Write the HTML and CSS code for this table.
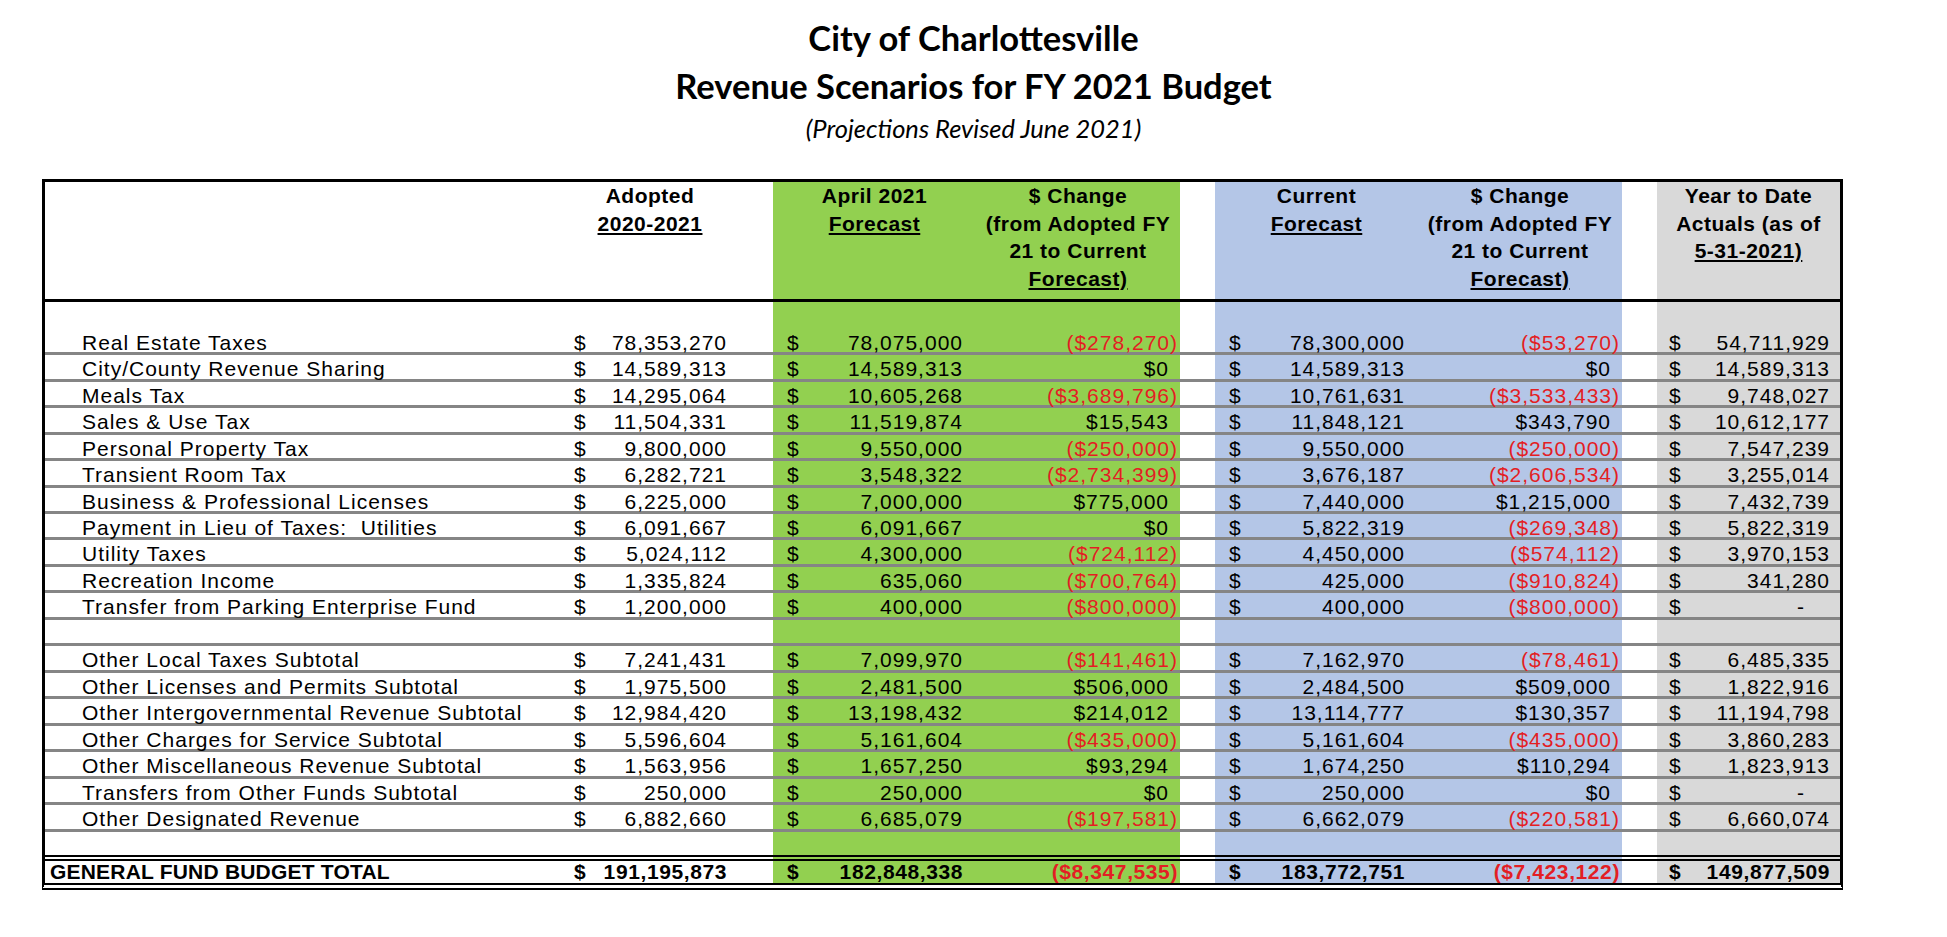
FILE: index.html
```html
<!DOCTYPE html>
<html lang="en">
<head>
<meta charset="utf-8">
<title>City of Charlottesville – Revenue Scenarios for FY 2021 Budget</title>
<link rel="stylesheet" href="styles.css">
</head>
<body>
<header class="titles">
  <div class="t1">City of Charlottesville</div>
  <div class="t2">Revenue Scenarios for FY 2021 Budget</div>
  <div class="t3">(Projections Revised June 2021)</div>
</header>

<table class="sheet">
  <colgroup>
    <col class="c-label">
    <col class="c-adopt">
    <col class="c-gap1">
    <col class="c-num g">
    <col class="c-chg g">
    <col class="c-gap b-gap">
    <col class="c-num b">
    <col class="c-chg b">
    <col class="c-gap">
    <col class="c-ytd y">
  </colgroup>
  <thead>
    <tr class="head">
      <th><div class="hcell"></div></th>
      <th><div class="hcell">Adopted<br><u>2020-2021</u></div></th>
      <th></th>
      <th><div class="hcell">April 2021<br><u>Forecast</u></div></th>
      <th><div class="hcell">$ Change<br>(from Adopted FY<br>21 to Current<br><u>Forecast)</u></div></th>
      <th></th>
      <th><div class="hcell">Current<br><u>Forecast</u></div></th>
      <th><div class="hcell">$ Change<br>(from Adopted FY<br>21 to Current<br><u>Forecast)</u></div></th>
      <th></th>
      <th><div class="hcell">Year to Date<br>Actuals (as of<br><u>5-31-2021)</u></div></th>
    </tr>
  </thead>
  <tbody>
    <tr class="blank-top"><td><div class="sp-top"></div></td><td></td><td></td><td></td><td></td><td></td><td></td><td></td><td></td><td></td></tr>

    <tr class="row"><td class="lbl">Real Estate Taxes</td><td><div class="acct"><span>$</span><span>78,353,270</span></div></td><td></td><td><div class="acct"><span>$</span><span>78,075,000</span></div></td><td class="chg neg">($278,270)</td><td></td><td><div class="acct"><span>$</span><span>78,300,000</span></div></td><td class="chg neg">($53,270)</td><td></td><td><div class="acct ytd"><span>$</span><span>54,711,929</span></div></td></tr>
    <tr class="row"><td class="lbl">City/County Revenue Sharing</td><td><div class="acct"><span>$</span><span>14,589,313</span></div></td><td></td><td><div class="acct"><span>$</span><span>14,589,313</span></div></td><td class="chg">$0</td><td></td><td><div class="acct"><span>$</span><span>14,589,313</span></div></td><td class="chg">$0</td><td></td><td><div class="acct ytd"><span>$</span><span>14,589,313</span></div></td></tr>
    <tr class="row"><td class="lbl">Meals Tax</td><td><div class="acct"><span>$</span><span>14,295,064</span></div></td><td></td><td><div class="acct"><span>$</span><span>10,605,268</span></div></td><td class="chg neg">($3,689,796)</td><td></td><td><div class="acct"><span>$</span><span>10,761,631</span></div></td><td class="chg neg">($3,533,433)</td><td></td><td><div class="acct ytd"><span>$</span><span>9,748,027</span></div></td></tr>
    <tr class="row"><td class="lbl">Sales &amp; Use Tax</td><td><div class="acct"><span>$</span><span>11,504,331</span></div></td><td></td><td><div class="acct"><span>$</span><span>11,519,874</span></div></td><td class="chg">$15,543</td><td></td><td><div class="acct"><span>$</span><span>11,848,121</span></div></td><td class="chg">$343,790</td><td></td><td><div class="acct ytd"><span>$</span><span>10,612,177</span></div></td></tr>
    <tr class="row"><td class="lbl">Personal Property Tax</td><td><div class="acct"><span>$</span><span>9,800,000</span></div></td><td></td><td><div class="acct"><span>$</span><span>9,550,000</span></div></td><td class="chg neg">($250,000)</td><td></td><td><div class="acct"><span>$</span><span>9,550,000</span></div></td><td class="chg neg">($250,000)</td><td></td><td><div class="acct ytd"><span>$</span><span>7,547,239</span></div></td></tr>
    <tr class="row"><td class="lbl">Transient Room Tax</td><td><div class="acct"><span>$</span><span>6,282,721</span></div></td><td></td><td><div class="acct"><span>$</span><span>3,548,322</span></div></td><td class="chg neg">($2,734,399)</td><td></td><td><div class="acct"><span>$</span><span>3,676,187</span></div></td><td class="chg neg">($2,606,534)</td><td></td><td><div class="acct ytd"><span>$</span><span>3,255,014</span></div></td></tr>
    <tr class="row"><td class="lbl">Business &amp; Professional Licenses</td><td><div class="acct"><span>$</span><span>6,225,000</span></div></td><td></td><td><div class="acct"><span>$</span><span>7,000,000</span></div></td><td class="chg">$775,000</td><td></td><td><div class="acct"><span>$</span><span>7,440,000</span></div></td><td class="chg">$1,215,000</td><td></td><td><div class="acct ytd"><span>$</span><span>7,432,739</span></div></td></tr>
    <tr class="row"><td class="lbl">Payment in Lieu of Taxes:&nbsp; Utilities</td><td><div class="acct"><span>$</span><span>6,091,667</span></div></td><td></td><td><div class="acct"><span>$</span><span>6,091,667</span></div></td><td class="chg">$0</td><td></td><td><div class="acct"><span>$</span><span>5,822,319</span></div></td><td class="chg neg">($269,348)</td><td></td><td><div class="acct ytd"><span>$</span><span>5,822,319</span></div></td></tr>
    <tr class="row"><td class="lbl">Utility Taxes</td><td><div class="acct"><span>$</span><span>5,024,112</span></div></td><td></td><td><div class="acct"><span>$</span><span>4,300,000</span></div></td><td class="chg neg">($724,112)</td><td></td><td><div class="acct"><span>$</span><span>4,450,000</span></div></td><td class="chg neg">($574,112)</td><td></td><td><div class="acct ytd"><span>$</span><span>3,970,153</span></div></td></tr>
    <tr class="row"><td class="lbl">Recreation Income</td><td><div class="acct"><span>$</span><span>1,335,824</span></div></td><td></td><td><div class="acct"><span>$</span><span>635,060</span></div></td><td class="chg neg">($700,764)</td><td></td><td><div class="acct"><span>$</span><span>425,000</span></div></td><td class="chg neg">($910,824)</td><td></td><td><div class="acct ytd"><span>$</span><span>341,280</span></div></td></tr>
    <tr class="row"><td class="lbl">Transfer from Parking Enterprise Fund</td><td><div class="acct"><span>$</span><span>1,200,000</span></div></td><td></td><td><div class="acct"><span>$</span><span>400,000</span></div></td><td class="chg neg">($800,000)</td><td></td><td><div class="acct"><span>$</span><span>400,000</span></div></td><td class="chg neg">($800,000)</td><td></td><td><div class="acct ytd"><span>$</span><span class="dash">-</span></div></td></tr>

    <tr class="row blank"><td class="lbl">&nbsp;</td><td></td><td></td><td></td><td></td><td></td><td></td><td></td><td></td><td></td></tr>

    <tr class="row"><td class="lbl">Other Local Taxes Subtotal</td><td><div class="acct"><span>$</span><span>7,241,431</span></div></td><td></td><td><div class="acct"><span>$</span><span>7,099,970</span></div></td><td class="chg neg">($141,461)</td><td></td><td><div class="acct"><span>$</span><span>7,162,970</span></div></td><td class="chg neg">($78,461)</td><td></td><td><div class="acct ytd"><span>$</span><span>6,485,335</span></div></td></tr>
    <tr class="row"><td class="lbl">Other Licenses and Permits Subtotal</td><td><div class="acct"><span>$</span><span>1,975,500</span></div></td><td></td><td><div class="acct"><span>$</span><span>2,481,500</span></div></td><td class="chg">$506,000</td><td></td><td><div class="acct"><span>$</span><span>2,484,500</span></div></td><td class="chg">$509,000</td><td></td><td><div class="acct ytd"><span>$</span><span>1,822,916</span></div></td></tr>
    <tr class="row"><td class="lbl">Other Intergovernmental Revenue Subtotal</td><td><div class="acct"><span>$</span><span>12,984,420</span></div></td><td></td><td><div class="acct"><span>$</span><span>13,198,432</span></div></td><td class="chg">$214,012</td><td></td><td><div class="acct"><span>$</span><span>13,114,777</span></div></td><td class="chg">$130,357</td><td></td><td><div class="acct ytd"><span>$</span><span>11,194,798</span></div></td></tr>
    <tr class="row"><td class="lbl">Other Charges for Service Subtotal</td><td><div class="acct"><span>$</span><span>5,596,604</span></div></td><td></td><td><div class="acct"><span>$</span><span>5,161,604</span></div></td><td class="chg neg">($435,000)</td><td></td><td><div class="acct"><span>$</span><span>5,161,604</span></div></td><td class="chg neg">($435,000)</td><td></td><td><div class="acct ytd"><span>$</span><span>3,860,283</span></div></td></tr>
    <tr class="row"><td class="lbl">Other Miscellaneous Revenue Subtotal</td><td><div class="acct"><span>$</span><span>1,563,956</span></div></td><td></td><td><div class="acct"><span>$</span><span>1,657,250</span></div></td><td class="chg">$93,294</td><td></td><td><div class="acct"><span>$</span><span>1,674,250</span></div></td><td class="chg">$110,294</td><td></td><td><div class="acct ytd"><span>$</span><span>1,823,913</span></div></td></tr>
    <tr class="row"><td class="lbl">Transfers from Other Funds Subtotal</td><td><div class="acct"><span>$</span><span>250,000</span></div></td><td></td><td><div class="acct"><span>$</span><span>250,000</span></div></td><td class="chg">$0</td><td></td><td><div class="acct"><span>$</span><span>250,000</span></div></td><td class="chg">$0</td><td></td><td><div class="acct ytd"><span>$</span><span class="dash">-</span></div></td></tr>
    <tr class="row"><td class="lbl">Other Designated Revenue</td><td><div class="acct"><span>$</span><span>6,882,660</span></div></td><td></td><td><div class="acct"><span>$</span><span>6,685,079</span></div></td><td class="chg neg">($197,581)</td><td></td><td><div class="acct"><span>$</span><span>6,662,079</span></div></td><td class="chg neg">($220,581)</td><td></td><td><div class="acct ytd"><span>$</span><span>6,660,074</span></div></td></tr>

    <tr class="blank-end"><td><div class="sp-end"></div></td><td></td><td></td><td></td><td></td><td></td><td></td><td></td><td></td><td></td></tr>

    <tr class="total"><td class="tlbl">GENERAL FUND BUDGET TOTAL</td><td><div class="acct"><span>$</span><span>191,195,873</span></div></td><td></td><td><div class="acct"><span>$</span><span>182,848,338</span></div></td><td class="chg neg">($8,347,535)</td><td></td><td><div class="acct"><span>$</span><span>183,772,751</span></div></td><td class="chg neg">($7,423,122)</td><td></td><td><div class="acct ytd"><span>$</span><span>149,877,509</span></div></td></tr>
  </tbody>
</table>
</body>
</html>
```

FILE: styles.css
```css
html, body {
  margin: 0;
  padding: 0;
  background: #ffffff;
}

body {
  font-family: "Liberation Sans", Arial, sans-serif;
  color: #000;
}

/* ---------- titles ---------- */
.titles {
  padding-top: 14px;
  text-align: center;
  font-family: Lato, "Open Sans", sans-serif;
  color: #000;
}

.t1,
.t2 {
  font-weight: 700;
  font-size: 34.5px;
  line-height: 48px;
}

.t3 {
  font-style: italic;
  font-size: 25.5px;
  line-height: 36px;
}

/* ---------- sheet ---------- */
.sheet {
  margin: 33px 0 0 42px;
  width: 1801px;
  table-layout: fixed;
  border-collapse: separate;
  border-spacing: 0;
  border: 3px solid #000;
  border-bottom: 7px double #000;
  font-size: 21px;
}

.c-label { width: 515px; }
.c-adopt { width: 180px; }
.c-gap1  { width: 33px; }
.c-num   { width: 203px; }
.c-chg   { width: 204px; }
.c-gap   { width: 35px; }
.c-ytd   { width: 183px; }

.g { background: #92d050; }
.b { background: #b4c6e7; }
.y { background: #d9d9d9; }

/* header */
.head th {
  padding: 0;
  vertical-align: top;
  text-align: center;
  font-weight: 700;
  font-size: 21px;
  line-height: 27.5px;
  letter-spacing: 0.5px;
  border-bottom: 3px solid #000;
}

.hcell {
  height: 117px;
}

.head u {
  text-decoration-thickness: 2px;
  text-underline-offset: 2px;
}

/* body rows */
.sheet td {
  padding: 0;
  white-space: nowrap;
  vertical-align: top;
}

.sp-top { height: 26.7px; }
.sp-end { height: 23.4px; }

.sheet .row td {
  padding-top: 5px;
  line-height: 18.47px;
  letter-spacing: 1px;
  border-bottom: 3px solid #858585;
}

.sheet .row td.lbl {
  padding-left: 37px;
}

.acct {
  display: flex;
  justify-content: space-between;
  padding: 0 13px 0 14px;
}

.acct.ytd {
  padding: 0 10px 0 12px;
}

.dash {
  padding-right: 25px;
}

.sheet td.chg {
  text-align: right;
  padding-right: 11px;
}

.sheet td.chg.neg {
  color: #e31e24;
  padding-right: 2px;
}

/* total row */
.sheet .total td {
  padding-top: 0;
  line-height: 22px;
  font-weight: 700;
  letter-spacing: 0.6px;
  border-top: 6px double #000;
}

.sheet .total td.tlbl {
  padding-left: 5px;
  letter-spacing: 0.2px;
}
```
